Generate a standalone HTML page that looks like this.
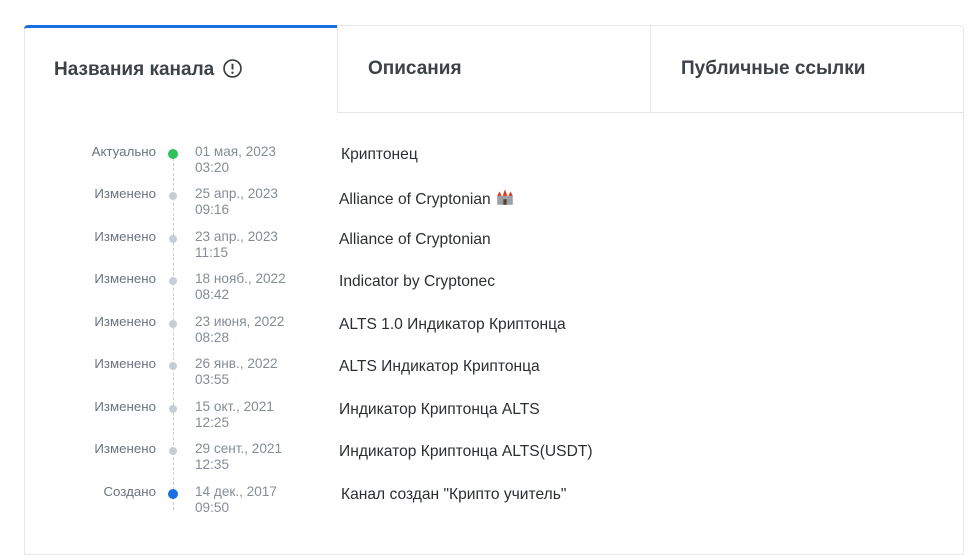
<!DOCTYPE html><html><head><meta charset="utf-8"><style>
*{margin:0;padding:0;box-sizing:border-box}
body{width:974px;height:546px;background:#fff;font-family:"Liberation Sans",sans-serif;position:relative;overflow:hidden}
.panel{position:absolute;left:24px;top:25px;width:940px;height:530px;border:1px solid #e4e7eb;border-radius:5px 5px 0 0}
.tab{position:absolute;top:25px;height:88px;font-size:19px;font-weight:bold;color:#3d4248;line-height:88px;border-bottom:1px solid #e4e7eb}
.t1{left:24px;width:313px;border-top:3px solid #1a6fe0;border-bottom:none;line-height:83px;padding-left:30px;border-radius:4px 0 0 0}
.t2{left:337px;width:314px;border-left:1px solid #e4e7eb;padding-left:30px}
.t3{left:650px;width:314px;border-left:1px solid #e4e7eb;padding-left:30px}
.line{position:absolute;left:173px;top:158px;height:352px;border-left:1px dashed #c9ced5}
.row{position:absolute;left:0;width:974px}
.lab{position:absolute;right:818px;font-size:13.3px;color:#6b7380;top:-1px}
.dot{position:absolute;left:169px;top:5px;width:8px;height:8px;border-radius:50%;background:#c7cdd4}
.date{position:absolute;left:195px;font-size:13.6px;color:#858c96;line-height:16px;top:-1px}
.txt{position:absolute;left:339px;font-size:15.6px;color:#2b2f33;top:1px}
</style></head><body>
<div class="panel"></div>
<div class="tab t1">Названия канала <svg width="19" height="19" viewBox="0 0 18 18" style="vertical-align:-3px;margin-left:3px"><circle cx="9" cy="9" r="8" fill="none" stroke="#3a3f45" stroke-width="1.6"/><line x1="9" y1="4.5" x2="9" y2="10" stroke="#3a3f45" stroke-width="1.8"/><circle cx="9" cy="13" r="1.1" fill="#3a3f45"/></svg></div>
<div class="tab t2">Описания</div>
<div class="tab t3">Публичные ссылки</div>
<div class="line"></div>
<div class="row" style="top:145px"><div class="lab">Актуально</div><div class="dot" style="background:#2fc25b;width:10px;height:10px;left:168px;top:4px"></div><div class="date">01 мая, 2023<br>03:20</div><div class="txt" style="left:341px">Криптонец</div></div>
<div class="row" style="top:187px"><div class="lab">Изменено</div><div class="dot"></div><div class="date">25 апр., 2023<br>09:16</div><div class="txt">Alliance of Cryptonian <svg width="20" height="18" viewBox="0 0 18 16" style="vertical-align:-2px"><rect x="2" y="7" width="14" height="8" fill="#9aa0a6"/><path d="M2 7l2-4 2 4M7 7l2-6 2 6M12 7l2-4 2 4" fill="#d9381e"/><rect x="7.5" y="10" width="3" height="5" fill="#5a4030"/></svg></div></div>
<div class="row" style="top:230px"><div class="lab">Изменено</div><div class="dot"></div><div class="date">23 апр., 2023<br>11:15</div><div class="txt">Alliance of Cryptonian</div></div>
<div class="row" style="top:272px"><div class="lab">Изменено</div><div class="dot"></div><div class="date">18 нояб., 2022<br>08:42</div><div class="txt">Indicator by Cryptonec</div></div>
<div class="row" style="top:315px"><div class="lab">Изменено</div><div class="dot"></div><div class="date">23 июня, 2022<br>08:28</div><div class="txt">ALTS 1.0 Индикатор Криптонца</div></div>
<div class="row" style="top:357px"><div class="lab">Изменено</div><div class="dot"></div><div class="date">26 янв., 2022<br>03:55</div><div class="txt">ALTS Индикатор Криптонца</div></div>
<div class="row" style="top:400px"><div class="lab">Изменено</div><div class="dot"></div><div class="date">15 окт., 2021<br>12:25</div><div class="txt">Индикатор Криптонца ALTS</div></div>
<div class="row" style="top:442px"><div class="lab">Изменено</div><div class="dot"></div><div class="date">29 сент., 2021<br>12:35</div><div class="txt">Индикатор Криптонца ALTS(USDT)</div></div>
<div class="row" style="top:485px"><div class="lab">Создано</div><div class="dot" style="background:#1a6fe0;width:10px;height:10px;left:168px;top:4px"></div><div class="date">14 дек., 2017<br>09:50</div><div class="txt" style="left:341px">Канал создан "Крипто учитель"</div></div>
</body></html>
